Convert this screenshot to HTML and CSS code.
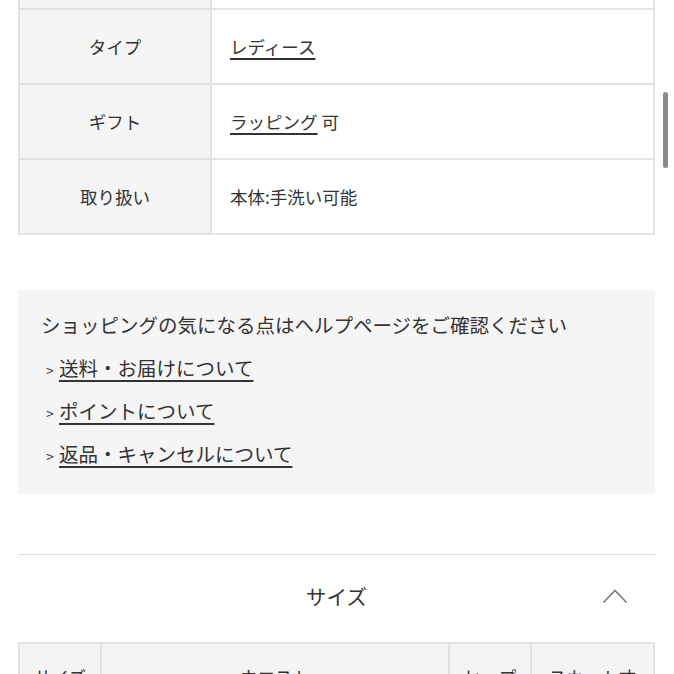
FILE: index.html
```
<!DOCTYPE html>
<html lang="ja">
<head>
<meta charset="utf-8">
<link rel="stylesheet" href="styles.css">
</head>
<body>
<div class="page">
  <table class="spec">
    <tr class="cut"><th></th><td></td></tr>
    <tr><th>タイプ</th><td><a href="#">レディース</a></td></tr>
    <tr><th>ギフト</th><td><a href="#">ラッピング</a> 可</td></tr>
    <tr><th>取り扱い</th><td>本体:手洗い可能</td></tr>
  </table>

  <div class="help">
    <p class="help-title">ショッピングの気になる点はヘルプページをご確認ください</p>
    <ul class="help-links">
      <li><span class="gt">&gt;</span><a href="#">送料・お届けについて</a></li>
      <li><span class="gt">&gt;</span><a href="#">ポイントについて</a></li>
      <li><span class="gt">&gt;</span><a href="#">返品・キャンセルについて</a></li>
    </ul>
  </div>

  <div class="section">
    <h2 class="section-title">サイズ</h2>
    <svg class="chev" width="26" height="16" viewBox="0 0 26 16"><path d="M1.5 14.5 L13 2.5 L24.5 14.5" fill="none" stroke="#7a7a7a" stroke-width="1.6"/></svg>
  </div>

  <table class="size">
    <tr><th class="c1">サイズ</th><th class="c2">ウエスト</th><th class="c3">ヒップ</th><th class="c4">スカート丈</th></tr>
  </table>
</div>
<div class="scrollbar"></div>
</body>
</html>
```
FILE: styles.css
```
html, body {
  margin: 0;
  padding: 0;
  background: #fff;
  overflow: hidden;
}
body {
  font-family: "Noto Sans CJK JP", "Noto Sans", sans-serif;
  color: #333;
}
.page {
  padding: 0 19px 0 18px;
}
a {
  color: #333;
  text-decoration: underline;
  text-underline-offset: 4px;
  text-decoration-thickness: 1.5px;
}
.spec {
  width: 100%;
  border-collapse: collapse;
  font-size: 17.5px;
}
.spec th, .spec td {
  border: 2px solid #e2e2e2;
  height: 73px;
  padding: 0;
  vertical-align: middle;
}
.spec th {
  width: 190px;
  background: #f5f5f5;
  font-weight: normal;
  text-align: center;
}
.spec td {
  padding-left: 18px;
  text-align: left;
}
.spec tr.cut th, .spec tr.cut td {
  height: 8px;
  border-top: none;
}
.help {
  margin-top: 55px;
  background: #f5f5f5;
  padding: 22px 22px 26px 23px;
  height: 156px;
}
.help-title {
  margin: 0;
  font-size: 19.5px;
  line-height: 26px;
}
.help-links {
  list-style: none;
  margin: 17px 0 0 0;
  padding: 0;
  font-size: 19.5px;
}
.help-links li {
  display: flex;
  align-items: baseline;
  height: 43px;
  line-height: 26px;
}
.gt {
  font-size: 14px;
  margin-left: 5px;
  width: 13px;
}
.section {
  margin-top: 60px;
  border-top: 1.5px solid #dcdcdc;
  height: 87px;
  display: flex;
  align-items: center;
  justify-content: center;
  position: relative;
}
.section-title {
  margin: 0;
  font-size: 20.5px;
  font-weight: normal;
  padding-bottom: 6px;
}
.chev {
  position: absolute;
  right: 27px;
  top: 33px;
}
.size {
  width: 100%;
  border-collapse: collapse;
  table-layout: fixed;
}
.size th {
  background: #f4f4f4;
  border: 2px solid #e2e2e2;
  font-weight: normal;
  font-size: 17.5px;
  height: 70px;
  padding: 20px 0 0 0;
  text-align: center;
  vertical-align: top;
}
.size .c1 { width: 80px; }
.size .c3 { width: 80px; }
.size .c4 { width: 121px; }
.scrollbar {
  position: fixed;
  right: 6px;
  top: 92px;
  width: 5px;
  height: 76px;
  background: #8a8a8a;
  border-radius: 3px;
}
```
